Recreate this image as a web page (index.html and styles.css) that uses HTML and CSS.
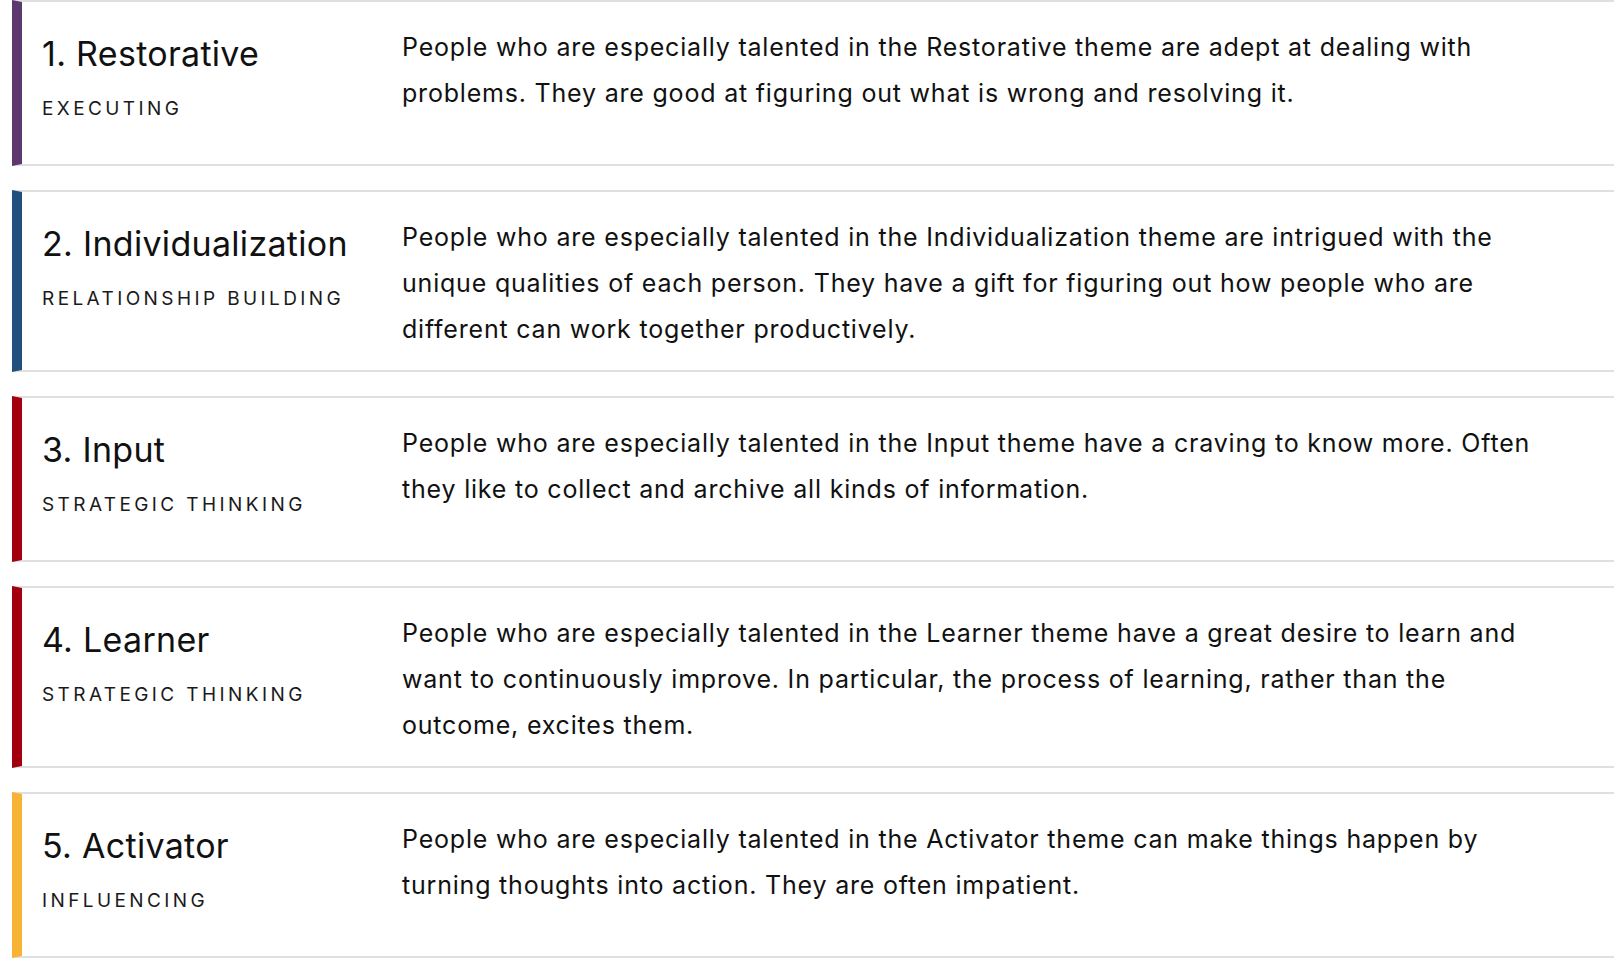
FILE: index.html
```html
<!DOCTYPE html>
<html lang="en">
<head>
<meta charset="utf-8">
<title>Top 5 Strengths</title>
<link rel="stylesheet" href="styles.css">
</head>
<body>
<ul class="themes">
  <li class="theme theme--executing">
    <div class="theme__head">
      <h2 class="theme__name">1. Restorative</h2>
      <p class="theme__domain">Executing</p>
    </div>
    <p class="theme__desc">People who are especially talented in the Restorative theme are adept at dealing with problems. They are good at figuring out what is wrong and resolving it.</p>
  </li>
  <li class="theme theme--relationship">
    <div class="theme__head">
      <h2 class="theme__name">2. Individualization</h2>
      <p class="theme__domain">Relationship Building</p>
    </div>
    <p class="theme__desc">People who are especially talented in the Individualization theme are intrigued with the unique qualities of each person. They have a gift for figuring out how people who are different can work together productively.</p>
  </li>
  <li class="theme theme--strategic">
    <div class="theme__head">
      <h2 class="theme__name">3. Input</h2>
      <p class="theme__domain">Strategic Thinking</p>
    </div>
    <p class="theme__desc">People who are especially talented in the Input theme have a craving to know more. Often they like to collect and archive all kinds of information.</p>
  </li>
  <li class="theme theme--strategic">
    <div class="theme__head">
      <h2 class="theme__name">4. Learner</h2>
      <p class="theme__domain">Strategic Thinking</p>
    </div>
    <p class="theme__desc">People who are especially talented in the Learner theme have a great desire to learn and want to continuously improve. In particular, the process of learning, rather than the outcome, excites them.</p>
  </li>
  <li class="theme theme--influencing">
    <div class="theme__head">
      <h2 class="theme__name">5. Activator</h2>
      <p class="theme__domain">Influencing</p>
    </div>
    <p class="theme__desc">People who are especially talented in the Activator theme can make things happen by turning thoughts into action. They are often impatient.</p>
  </li>
</ul>
</body>
</html>
```

FILE: styles.css
```css
* {
  box-sizing: border-box;
}

html, body {
  margin: 0;
  padding: 0;
  background: #ffffff;
}

body {
  font-family: Inter, "Noto Sans", "Liberation Sans", sans-serif;
  color: #111111;
}

.themes {
  list-style: none;
  margin: 0;
  padding: 0 0 0 12px;
  display: flex;
  flex-direction: column;
  gap: 24px;
}

.theme {
  display: flex;
  align-items: flex-start;
  border-top: 2px solid #e0e0e0;
  border-bottom: 2px solid #e0e0e0;
  border-left: 10px solid #cccccc;
  min-height: 166px;
}

.theme--executing { border-left-color: #5c386f; }
.theme--relationship { border-left-color: #22507c; }
.theme--strategic { border-left-color: #a3000f; }
.theme--influencing { border-left-color: #f7b335; }

.theme__head {
  flex: 0 0 380px;
  padding: 32px 0 0 20px;
}

.theme__name {
  margin: 0;
  font-size: 34px;
  font-weight: 400;
  line-height: 40px;
  letter-spacing: 0.3px;
  color: #111111;
}

.theme__domain {
  margin: 23px 0 0;
  font-size: 19px;
  line-height: 24px;
  text-transform: uppercase;
  letter-spacing: 3.4px;
  color: #1a1a1a;
}

.theme__desc {
  flex: 1 1 auto;
  margin: 0;
  padding: 22px 66px 18px 0;
  font-size: 25px;
  line-height: 46px;
  letter-spacing: 0.8px;
  color: #111111;
}
```
